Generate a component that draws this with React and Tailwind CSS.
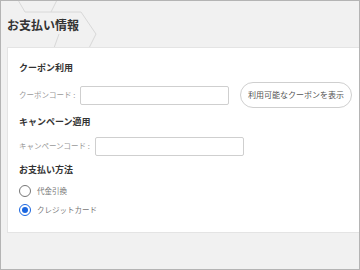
import React, { useState } from "react"

const font = { fontFamily: '"Noto Sans CJK JP", "Noto Sans", sans-serif' }

const Radio = ({ checked, label, onClick }) => (
    <button type="button" onClick={onClick} className="flex h-[16px] items-center gap-[6px] text-left">
        {checked ? (
            <span className="flex h-[12px] w-[12px] items-center justify-center rounded-full border-[1.5px] border-[#1a66e0] bg-white">
                <span className="h-[6px] w-[6px] rounded-full bg-[#1a66e0]" />
            </span>
        ) : (
            <span className="h-[12px] w-[12px] rounded-full border-[1.5px] border-[#767676] bg-white" />
        )}
        <span className="text-[7.5px] leading-none text-[#777]">{label}</span>
    </button>
)

export default function App() {
    const [method, setMethod] = useState("card")

    return (
        <div style={font} className="relative h-[270px] w-[360px] overflow-hidden border border-[#b4b4b4] bg-[#f1f1f1]">
            <svg className="absolute left-0 top-0" width="120" height="50" viewBox="0 0 120 50" fill="none" stroke="#d8d8d8" strokeWidth="1">
                <polyline points="17,-1 24,11 50,11 56,-1" />
                <polyline points="50,11 80,11 95,33 88,47" />
                <line x1="58" y1="33" x2="53" y2="47" />
            </svg>

            <div className="relative">
                <div className="mt-[14px] flex h-[20px] items-center pl-[6px]">
                    <h1 className="text-[12px] font-bold leading-none text-[#333]">お支払い情報</h1>
                </div>

                <div className="ml-[6px] mt-[12px] border border-r-0 border-[#e4e4e4] bg-white pb-[14px] pl-[11px] pt-[11px]">
                    <h2 className="flex h-[16px] items-center text-[9px] font-bold leading-none text-[#333]">クーポン利用</h2>
                    <div className="mt-[6px] flex h-[28px] items-center">
                        <span className="w-[61px] text-[7.5px] leading-none text-[#999]">クーポンコード :</span>
                        <input className="h-[19px] w-[149px] rounded-[2px] border border-[#cfcfcf] bg-white outline-none" />
                        <button type="button" className="ml-[11px] flex h-[26px] w-[112px] items-center justify-center rounded-full border border-[#cfcfcf] bg-white text-[8px] leading-none text-[#555]">
                            利用可能なクーポンを表示
                        </button>
                    </div>

                    <h2 className="mt-[4px] flex h-[16px] items-center text-[9px] font-bold leading-none text-[#333]">キャンペーン適用</h2>
                    <div className="mt-[7px] flex h-[20px] items-center">
                        <span className="w-[76px] text-[7.5px] leading-none text-[#999]">キャンペーンコード :</span>
                        <input className="h-[19px] w-[149px] rounded-[2px] border border-[#cfcfcf] bg-white outline-none" />
                    </div>

                    <h2 className="mt-[5px] flex h-[16px] items-center text-[9px] font-bold leading-none text-[#333]">お支払い方法</h2>
                    <div className="mt-[6px]">
                        <Radio checked={method === "cod"} label="代金引換" onClick={() => setMethod("cod")} />
                    </div>
                    <div className="mt-[3px]">
                        <Radio checked={method === "card"} label="クレジットカード" onClick={() => setMethod("card")} />
                    </div>
                </div>
            </div>
        </div>
    )
}
